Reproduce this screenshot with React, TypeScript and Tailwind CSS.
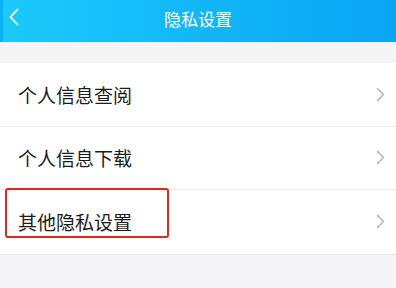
import React from "react";

const font = { fontFamily: '"Noto Sans CJK SC", "Noto Sans", sans-serif' };

function Chevron() {
  return (
    <svg width="9" height="15" viewBox="0 0 9 15" className="shrink-0">
      <path d="M1.5 1.5 L7.5 7.5 L1.5 13.5" fill="none" stroke="#b5b5b5" strokeWidth="1.5" strokeLinecap="round" strokeLinejoin="round" />
    </svg>
  );
}

function Row({ label, highlight, last }: { label: string; highlight?: boolean; last?: boolean }) {
  return (
    <div className={`relative flex h-[63.5px] items-center justify-between pl-[18px] pr-[11px] ${last ? "" : "border-b border-[#ececec]"}`}>
      <span className="text-[19px] leading-none text-[#1c1c1c]">{label}</span>
      <Chevron />
      {highlight && (
        <div className="absolute left-[5px] top-[-2px] h-[50px] w-[164px] rounded-[3px] border-[2.5px] border-[#e3261c]" />
      )}
    </div>
  );
}

export default function App() {
  return (
    <div className="h-[288px] w-[396px] overflow-hidden bg-[#f5f5f7]" style={font}>
      <div className="relative flex h-[42px] items-center justify-center bg-gradient-to-r from-[#1ccafb] to-[#0aa4f4] pb-[6px]">
        <div className="absolute left-0 top-0 h-full w-[3px] bg-[#0ab2f6]" />
        <svg width="12" height="18" viewBox="0 0 12 18" className="absolute left-[8px] top-[8px]">
          <path d="M9.5 1.5 L2.5 9 L9.5 16.5" fill="none" stroke="#ffffff" strokeWidth="1.8" strokeLinecap="round" strokeLinejoin="round" />
        </svg>
        <span className="text-[17px] leading-none text-white">隐私设置</span>
      </div>
      <div className="h-[21px]" />
      <div className="border-b border-[#e6e6e6] bg-white">
        <Row label="个人信息查阅" />
        <Row label="个人信息下载" />
        <Row label="其他隐私设置" highlight last />
      </div>
    </div>
  );
}
